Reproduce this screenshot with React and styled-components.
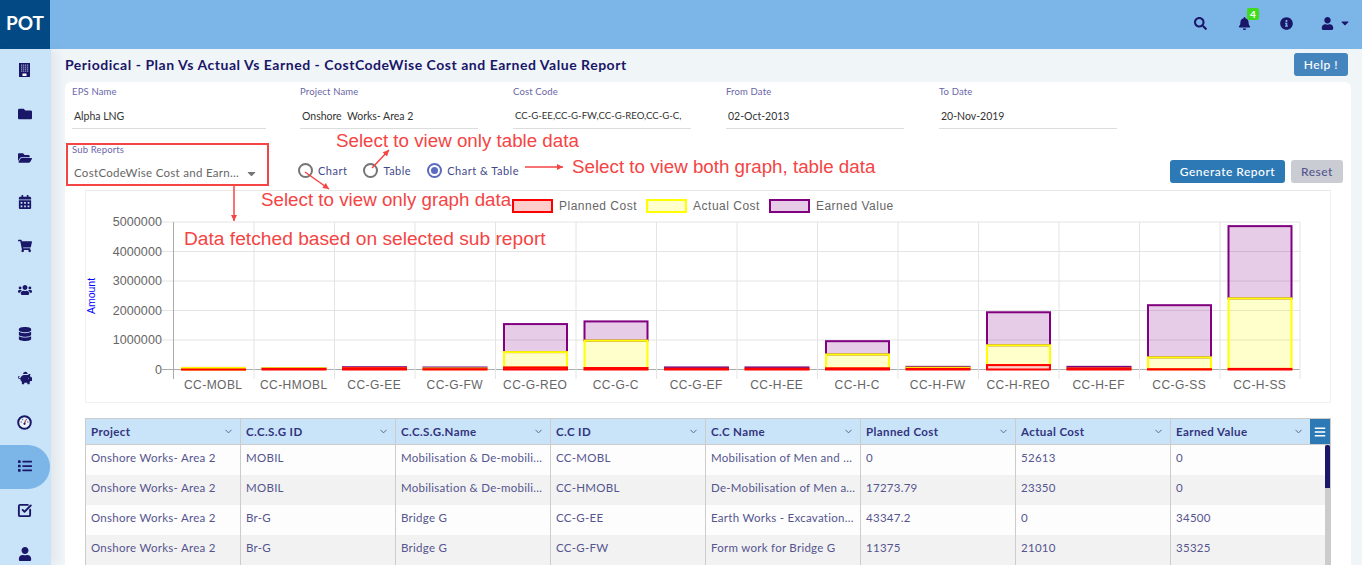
import styled, { createGlobalStyle } from "styled-components";
import {
  FaFolder, FaFolderOpen, FaCalendarAlt, FaShoppingCart, FaUsers, FaDatabase,
  FaPiggyBank, FaList, FaUser, FaSearch, FaBell,
  FaInfoCircle, FaCaretDown, FaBars,
} from "react-icons/fa";
import { FiChevronDown } from "react-icons/fi";
import { SquareCheckBig } from "lucide-react";

const NAVY = "#1a1668";

const GlobalStyle = createGlobalStyle`
  html, body {
    margin: 0;
    height: 565px;
    overflow: hidden;
    font-family: Lato, "Liberation Sans", sans-serif;
    background: #f0f5f8;
  }
  * { box-sizing: border-box; }
`;

const Page = styled.div`
  position: relative;
  width: 1362px;
  height: 565px;
  overflow: hidden;
`;

const TopBar = styled.header`
  display: flex;
  align-items: center;
  height: 49px;
  background: #7cb6e8;
  color: ${NAVY};
`;

const Logo = styled.div`
  width: 50px;
  height: 49px;
  display: flex;
  align-items: center;
  justify-content: center;
  background: #034a84;
  color: #fff;
  font-size: 19px;
  font-weight: 700;
  padding-bottom: 4px;
`;

const TopIcons = styled.div`
  display: flex;
  align-items: center;
  margin-left: auto;
  padding-right: 11px;
  padding-bottom: 3px;
`;

const TopIcon = styled.span`
  position: relative;
  display: flex;
  margin-left: ${p => p.$gap || 30}px;
  font-size: 13px;
`;

const Badge = styled.span`
  position: absolute;
  left: 9px;
  top: -9px;
  width: 12px;
  height: 12px;
  border-radius: 2px;
  background: #3fdc1c;
  color: #fff;
  font-size: 10px;
  font-weight: 700;
  line-height: 12px;
  text-align: center;
`;

const Body = styled.div`
  display: flex;
  height: 516px;
`;

const Sidebar = styled.nav`
  width: 51px;
  flex: none;
  background: #c9e4f8;
  box-shadow: 6px 0 10px rgba(60, 80, 90, 0.08);
`;

const NavItem = styled.div`
  height: 44px;
  width: 50px;
  display: flex;
  align-items: center;
  justify-content: center;
  color: ${NAVY};
  font-size: 14px;
  padding: 0 1px 2px 0;
  background: ${p => (p.$active ? "#7cb6e8" : "transparent")};
  border-radius: ${p => (p.$active ? "0 22px 22px 0" : "0")};
`;

const Main = styled.main`
  flex: 1;
  padding: 0 11px 0 14px;
`;

const TitleRow = styled.div`
  height: 33px;
  display: flex;
  align-items: center;
  justify-content: space-between;
  padding-right: 3px;
`;

const Title = styled.h1`
  margin: -2px 0 0;
  font-size: 14px;
  font-weight: 700;
  color: ${NAVY};
  letter-spacing: 0.53px;
`;

const HelpButton = styled.button`
  width: 54px;
  height: 23px;
  margin-top: -3px;
  border: 0;
  border-radius: 3px;
  background: #4585bd;
  color: #fff;
  font: 500 12px Lato, sans-serif;
  letter-spacing: 0.5px;
`;

const Card = styled.section`
  height: 490px;
  background: #fff;
  border-radius: 6px 6px 0 0;
`;

const FormRow = styled.div`
  display: flex;
  padding: 4px 0 0 7px;
  height: 48px;
`;

const Field = styled.div`
  width: ${p => p.$w || 178}px;
  margin-right: ${p => p.$mr || 35}px;
  border-bottom: 1px solid #ddd;
  height: 43px;
`;

const FieldLabel = styled.div`
  font-size: 9.5px;
  line-height: 11px;
  color: #6a66a8;
  letter-spacing: 0.15px;
`;

const FieldValue = styled.div`
  margin-top: 12px;
  padding-left: 2px;
  font-size: ${p => p.$size || 10.5}px;
  line-height: 14px;
  color: #333;
  white-space: nowrap;
  overflow: hidden;
`;

const ControlRow = styled.div`
  display: flex;
  align-items: flex-start;
  height: 60px;
  padding: 14px 8px 0 7px;
`;

const SelectField = styled.div`
  width: 194px;
  height: 42px;
  border-bottom: 1px solid #3f51b5;
`;

const SelectValue = styled.div`
  display: flex;
  justify-content: space-between;
  align-items: center;
  margin-top: 11px;
  padding: 0 8px 0 2px;
  font-size: 11.5px;
  line-height: 14px;
  color: #666;
  letter-spacing: 0.3px;
  white-space: nowrap;
  svg { font-size: 13px; color: #757575; }
`;

const RadioGroup = styled.div`
  display: flex;
  margin: 19px 0 0 32px;
`;

const RadioOption = styled.label`
  display: flex;
  align-items: center;
  margin-right: 16px;
  font-size: 11px;
  color: #3f4a8c;
  letter-spacing: 0.5px;
`;

const RadioDot = styled.span`
  width: 15px;
  height: 15px;
  margin-right: 5px;
  border-radius: 50%;
  border: 2px solid ${p => (p.$on ? "#5c6bc0" : "#757575")};
  display: flex;
  align-items: center;
  justify-content: center;
  &::after {
    content: "";
    display: ${p => (p.$on ? "block" : "none")};
    width: 7px;
    height: 7px;
    border-radius: 50%;
    background: #5c6bc0;
  }
`;

const Actions = styled.div`
  display: flex;
  gap: 6px;
  margin: 16px 0 0 auto;
`;

const ActionButton = styled.button`
  height: 23px;
  width: ${p => p.$w}px;
  border: 0;
  border-radius: 3px;
  background: ${p => p.$bg};
  color: ${p => p.$fg};
  font: 500 12px Lato, sans-serif;
  letter-spacing: 0.5px;
`;

const ChartBox = styled.div`
  margin: 0 20px;
  height: 213px;
  border: 1px solid #f0f0f0;
  border-top-color: #e8e8e8;
`;

const Legend = styled.div`
  display: flex;
  align-items: center;
  height: 21px;
  padding: 8px 0 0 426px;
`;

const LegendItem = styled.span`
  display: flex;
  align-items: center;
  margin-right: 9px;
  font: 12px "Liberation Sans", Arial, sans-serif;
  letter-spacing: 0.5px;
  color: #666;
`;

const LegendSwatch = styled.i`
  width: 41px;
  height: 14px;
  margin-right: 6px;
  border: 2px solid ${p => p.$c};
  background: ${p => p.$fill};
`;

const ChartSvg = styled.svg`
  display: block;
  width: 1244px;
  height: 190px;
  font-family: "Liberation Sans", Arial, sans-serif;
`;

const Table = styled.div`
  position: relative;
  margin: 15px 20px 0;
  border: 1px solid #ccc;
  border-bottom: 0;
`;

const columns = "154px 155px 155px 155px 155px 155px 155px 1fr";

const HeadRow = styled.div`
  display: grid;
  grid-template-columns: ${columns};
  height: 26px;
  background: #c9e4f8;
  border-bottom: 1px solid #ccc;
`;

const HeadCell = styled.div`
  display: flex;
  align-items: center;
  justify-content: space-between;
  padding: 0 ${p => p.$pr || 6}px 1px 5px;
  border-left: ${p => (p.$first ? "0" : "1px solid #ccc")};
  font-size: 11.5px;
  font-weight: 700;
  color: #33337f;
  letter-spacing: 0.4px;
  svg { font-size: 11px; color: #555a90; }
`;

const DataRow = styled.div`
  display: grid;
  grid-template-columns: ${columns};
  height: 30px;
  background: ${p => (p.$odd ? "#f2f2f2" : "#fdfdfd")};
`;

const DataCell = styled.div`
  display: flex;
  align-items: center;
  padding: 0 0 6px 5px;
  border-left: ${p => (p.$first ? "0" : "1px solid #ccc")};
  font-size: 11.5px;
  color: #55558f;
  letter-spacing: 0.27px;
  white-space: nowrap;
  overflow: hidden;
`;

const MenuButton = styled.div`
  position: absolute;
  right: 0;
  top: 0;
  width: 20px;
  height: 25px;
  display: flex;
  align-items: center;
  justify-content: center;
  background: #2c79b5;
  color: #fff;
  font-size: 12px;
`;

const ScrollTrack = styled.div`
  position: absolute;
  right: 0;
  top: 26px;
  bottom: 0;
  width: 5px;
  background: #ccc;
`;

const ScrollThumb = styled.div`
  width: 5px;
  height: 43px;
  border-radius: 2px 2px 0 0;
  background: ${NAVY};
`;

const Note = styled.span`
  position: absolute;
  left: ${p => p.$x}px;
  top: ${p => p.$y}px;
  font: ${p => p.$size || 18.75}px/20px "Liberation Sans", Arial, sans-serif;
  color: #f44444;
  white-space: nowrap;
`;

const RedBox = styled.div`
  position: absolute;
  left: 66px;
  top: 143px;
  width: 203px;
  height: 43px;
  border: 2px solid #f44444;
`;

const ArrowLayer = styled.svg`
  position: absolute;
  left: 0;
  top: 0;
  width: 1362px;
  height: 565px;
  pointer-events: none;
`;

function BuildingIcon() {
  const windows = [];
  for (let r = 0; r < 4; r++) {
    for (let c = 0; c < 4; c++) {
      windows.push(<rect key={`${r}-${c}`} x={2 + c * 2} y={1.5 + r * 2} width="1.3" height="1.3" fill="#8f9cc4" />);
    }
  }
  return (
    <svg width="11" height="14" viewBox="0 0 11 14">
      <rect width="11" height="14" fill={NAVY} />
      {windows}
      <rect x="3.5" y="10.5" width="4" height="2.5" fill="#fff" />
    </svg>
  );
}

function GaugeIcon() {
  return (
    <svg width="15" height="15" viewBox="0 0 15 15">
      <circle cx="7.5" cy="7.5" r="6.3" fill="#eef6fc" stroke={NAVY} strokeWidth="2" />
      <circle cx="4.2" cy="7" r="0.8" fill="#6a76a8" />
      <circle cx="5.6" cy="4.6" r="0.8" fill="#6a76a8" />
      <circle cx="9.4" cy="4.6" r="0.8" fill="#6a76a8" />
      <circle cx="10.8" cy="7" r="0.8" fill="#6a76a8" />
      <path d="M7.5 8.6 L8.6 5.2" stroke="#c0392b" strokeWidth="1.2" />
      <circle cx="7.5" cy="8.8" r="1.1" fill={NAVY} />
    </svg>
  );
}

const navIcons = [
  <BuildingIcon />, <FaFolder />, <FaFolderOpen />, <FaCalendarAlt />, <FaShoppingCart />, <FaUsers />,
  <FaDatabase />, <FaPiggyBank />, <GaugeIcon />, <FaList />,
  <SquareCheckBig size={15} strokeWidth={3} />, <FaUser />,
];

const heads = ["Project", "C.C.S.G ID", "C.C.S.G.Name", "C.C ID", "C.C Name", "Planned Cost", "Actual Cost", "Earned Value"];

const rows = [
  ["Onshore Works- Area 2", "MOBIL", "Mobilisation & De-mobili...", "CC-MOBL", "Mobilisation of Men and ...", "0", "52613", "0"],
  ["Onshore Works- Area 2", "MOBIL", "Mobilisation & De-mobili...", "CC-HMOBL", "De-Mobilisation of Men a...", "17273.79", "23350", "0"],
  ["Onshore Works- Area 2", "Br-G", "Bridge G", "CC-G-EE", "Earth Works - Excavation...", "43347.2", "0", "34500"],
  ["Onshore Works- Area 2", "Br-G", "Bridge G", "CC-G-FW", "Form work for Bridge G", "11375", "21010", "35325"],
];

const bars = [
  ["CC-MOBL", 0, 52613, 0],
  ["CC-HMOBL", 17273, 23350, 0],
  ["CC-G-EE", 43347, 0, 34500],
  ["CC-G-FW", 11375, 21010, 35325],
  ["CC-G-REO", 70000, 520000, 950000],
  ["CC-G-C", 50000, 930000, 650000],
  ["CC-G-EF", 20000, 0, 50000],
  ["CC-H-EE", 20000, 0, 50000],
  ["CC-H-C", 40000, 470000, 450000],
  ["CC-H-FW", 20000, 40000, 30000],
  ["CC-H-REO", 150000, 670000, 1120000],
  ["CC-H-EF", 30000, 0, 60000],
  ["CC-G-SS", 10000, 400000, 1770000],
  ["CC-H-SS", 20000, 2390000, 2450000],
];

const AXIS_X = 173;
const COL_W = 80.5;
const ZERO_Y = 369.5;
const yFor = v => ZERO_Y - (v / 1000000) * 29.5;

function Bar({ data, index }) {
  const [, planned, actual, earned] = data;
  const x = AXIS_X + COL_W * index + 9;
  const segs = [
    [planned + actual, planned + actual + earned, "#800080", "rgba(128,0,128,0.2)"],
    [planned, planned + actual, "#ffff00", "rgba(255,255,0,0.2)"],
    [0, planned, "#ff0000", "rgba(255,0,0,0.2)"],
  ];
  // a zero height rect draws nothing, the chart still shows its outline
  return segs.map(([from, to, stroke, fill]) => (
    <rect key={stroke} x={x} y={yFor(to)} width={63} height={Math.max(yFor(from) - yFor(to), 0.1)} fill={fill} stroke={stroke} strokeWidth="2" />
  ));
}

function Chart() {
  const ticks = [0, 1, 2, 3, 4, 5];
  return (
    <ChartSvg viewBox="86 212 1244 190">
      {ticks.map(t => (
        <g key={t}>
          <line x1={AXIS_X - 11} x2={AXIS_X + COL_W * 14} y1={yFor(t * 1000000)} y2={yFor(t * 1000000)} stroke={t ? "#e4e4e4" : "#aaa"} />
          <text x={AXIS_X - 11} y={yFor(t * 1000000) + 4} textAnchor="end" fontSize="12.5" fill="#666" letterSpacing="0.1">{t ? t * 1000000 : 0}</text>
        </g>
      ))}
      {bars.map((b, i) => (
        <line key={b[0]} x1={AXIS_X + COL_W * i + 0.5} x2={AXIS_X + COL_W * i + 0.5} y1="222" y2="379" stroke={i ? "#e4e4e4" : "#aaa"} />
      ))}
      <line x1={AXIS_X + COL_W * 14} x2={AXIS_X + COL_W * 14} y1="222" y2="379" stroke="#e4e4e4" />
      {bars.map((b, i) => <Bar key={b[0]} data={b} index={i} />)}
      {bars.map((b, i) => (
        <text key={b[0]} x={AXIS_X + COL_W * (i + 0.5)} y="389" textAnchor="middle" fontSize="12" fill="#666" letterSpacing="0.45">{b[0]}</text>
      ))}
      <text transform="translate(95 296) rotate(-90)" textAnchor="middle" fontSize="10.5" fill="#0000ff">Amount</text>
    </ChartSvg>
  );
}

function Arrow({ x1, y1, x2, y2 }) {
  const angle = Math.atan2(y2 - y1, x2 - x1);
  const p = (len, off) => {
    const bx = x2 - len * Math.cos(angle);
    const by = y2 - len * Math.sin(angle);
    return `${bx - off * Math.sin(angle)},${by + off * Math.cos(angle)}`;
  };
  return (
    <g>
      <line x1={x1} y1={y1} x2={x2} y2={y2} stroke="#f44444" strokeWidth="1.5" />
      <polygon points={`${x2},${y2} ${p(6, 3)} ${p(6, -3)}`} fill="#f44444" />
    </g>
  );
}

export default function App() {
  return (
    <Page>
      <GlobalStyle />
      <TopBar>
        <Logo>POT</Logo>
        <TopIcons>
          <TopIcon><FaSearch /></TopIcon>
          <TopIcon $gap={31}><FaBell /><Badge>4</Badge></TopIcon>
          <TopIcon $gap={29}><FaInfoCircle /></TopIcon>
          <TopIcon $gap={28}><FaUser /></TopIcon>
          <TopIcon $gap={5}><FaCaretDown size={12} /></TopIcon>
        </TopIcons>
      </TopBar>
      <Body>
        <Sidebar>
          {navIcons.map((icon, i) => (
            <NavItem key={i} $active={i === 9}>{icon}</NavItem>
          ))}
        </Sidebar>
        <Main>
          <TitleRow>
            <Title>Periodical - Plan Vs Actual Vs Earned - CostCodeWise Cost and Earned Value Report</Title>
            <HelpButton>Help !</HelpButton>
          </TitleRow>
          <Card>
            <FormRow>
              <Field $w={194} $mr={34}><FieldLabel>EPS Name</FieldLabel><FieldValue>Alpha LNG</FieldValue></Field>
              <Field><FieldLabel>Project Name</FieldLabel><FieldValue>Onshore&nbsp; Works- Area 2</FieldValue></Field>
              <Field><FieldLabel>Cost Code</FieldLabel><FieldValue $size={9.6}>CC-G-EE,CC-G-FW,CC-G-REO,CC-G-C,</FieldValue></Field>
              <Field><FieldLabel>From Date</FieldLabel><FieldValue>02-Oct-2013</FieldValue></Field>
              <Field><FieldLabel>To Date</FieldLabel><FieldValue>20-Nov-2019</FieldValue></Field>
            </FormRow>
            <ControlRow>
              <SelectField>
                <FieldLabel>Sub Reports</FieldLabel>
                <SelectValue>CostCodeWise Cost and Earn... <FaCaretDown /></SelectValue>
              </SelectField>
              <RadioGroup>
                <RadioOption><RadioDot />Chart</RadioOption>
                <RadioOption><RadioDot />Table</RadioOption>
                <RadioOption><RadioDot $on />Chart &amp; Table</RadioOption>
              </RadioGroup>
              <Actions>
                <ActionButton $w={115} $bg="#2c79b5" $fg="#fff">Generate Report</ActionButton>
                <ActionButton $w={52} $bg="#c9ccd2" $fg="#55558f">Reset</ActionButton>
              </Actions>
            </ControlRow>
            <ChartBox>
              <Legend>
                <LegendItem><LegendSwatch $c="#ff0000" $fill="rgba(255,0,0,0.2)" />Planned Cost</LegendItem>
                <LegendItem><LegendSwatch $c="#ffff00" $fill="rgba(255,255,0,0.2)" />Actual Cost</LegendItem>
                <LegendItem><LegendSwatch $c="#800080" $fill="rgba(128,0,128,0.2)" />Earned Value</LegendItem>
              </Legend>
              <Chart />
            </ChartBox>
            <Table>
              <HeadRow>
                {heads.map((h, i) => (
                  <HeadCell key={h} $first={i === 0} $pr={i === 7 ? 26 : 6}>{h}<FiChevronDown /></HeadCell>
                ))}
              </HeadRow>
              {rows.map((r, i) => (
                <DataRow key={i} $odd={i % 2 === 1}>
                  {r.map((c, j) => <DataCell key={j} $first={j === 0}>{c}</DataCell>)}
                </DataRow>
              ))}
              <MenuButton><FaBars /></MenuButton>
              <ScrollTrack><ScrollThumb /></ScrollTrack>
            </Table>
          </Card>
        </Main>
      </Body>
      <RedBox />
      <Note $x={336} $y={131}>Select to view only table data</Note>
      <Note $x={572} $y={157}>Select to view both graph, table data</Note>
      <Note $x={261} $y={190}>Select to view only graph data</Note>
      <Note $x={184} $y={229} $size={19.2}>Data fetched based on selected sub report</Note>
      <ArrowLayer>
        <Arrow x1={305} y1={172} x2={329} y2={189} />
        <Arrow x1={372} y1={168} x2={389} y2={150} />
        <Arrow x1={525} y1={167} x2={563} y2={167} />
        <Arrow x1={234} y1={186} x2={234} y2={221} />
      </ArrowLayer>
    </Page>
  );
}
